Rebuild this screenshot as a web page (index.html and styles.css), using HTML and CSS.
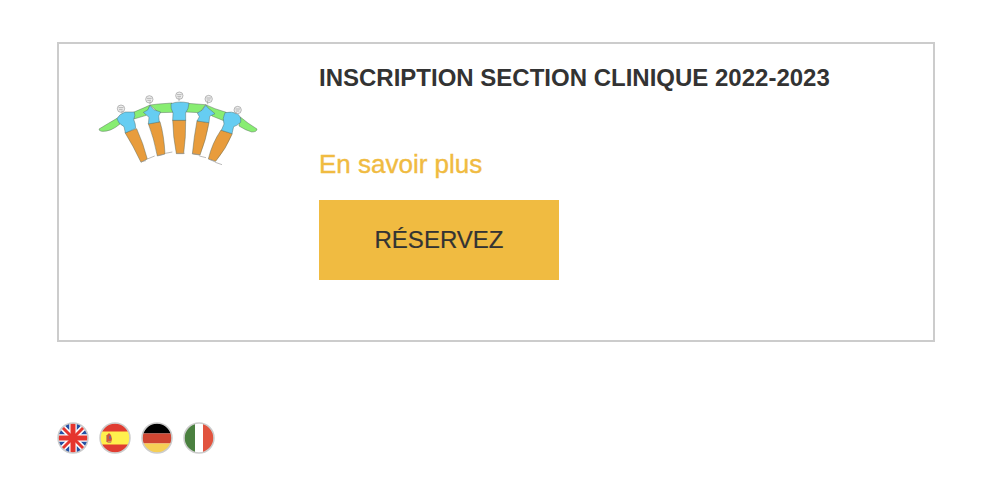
FILE: index.html
```html
<!DOCTYPE html>
<html lang="fr">
<head>
    <meta charset="UTF-8">
    <meta name="viewport" content="width=device-width, initial-scale=1.0">
    <title>Inscription Section Clinique</title>
    <link rel="stylesheet" href="styles.css">
</head>
<body>
    <div class="event-card">
        <svg class="event-logo" viewBox="0 0 540 300" aria-hidden="true">
            <g class="arms">
                <path d="M27 147Q55 130 86 112L90 132Q62 156 35 154Q27 153 27 147Z"/>
                <path d="M130 97L165 82L180 75L169 106L132 117Z"/>
                <path d="M180 75L205 72L246 69L249 97L206 98Z"/>
                <path d="M292 70L347 74L330 98L288 96Z"/>
                <path d="M347 74L375 86L409 97L401 122L366 108Z"/>
                <path d="M451 111Q473 130 501 147Q501 156 485 156Q465 150 447 138Z"/>
            </g>
            <g class="trousers">
                <path d="M105 158L140 146Q160 190 172 237L153 247Q130 198 105 158Z"/>
                <path d="M175 131L210 125Q222 165 225 222L202 228Q192 175 175 131Z"/>
                <path d="M248 120L287 120Q288 170 281 221L259 221Q249 170 248 120Z"/>
                <path d="M321 122L357 128Q348 180 330 225L307 222Q312 170 321 122Z"/>
                <path d="M393 150L427 161Q409 205 377 244L355 237Q366 190 393 150Z"/>
            </g>
            <g class="shirts">
                <path d="M81 116Q88 102 105 96L133 96Q137 107 131 118Q137 131 137 145L106 159L102 140Q83 130 81 116Z"/>
                <path d="M160 97L173 90L180 76L191 89L212 96L206 108L208 126L175 132L177 112Z"/>
                <path d="M243 71Q265 62 297 69Q296 88 287 98L287 121L248 121L249 99Q241 85 243 71Z"/>
                <path d="M322 99L337 90L347 76L357 86L375 101L359 109L357 128L321 123L328 110Z"/>
                <path d="M405 98Q425 93 442 101Q455 111 452 127Q440 138 431 140L426 161L394 151L402 132Q396 115 405 98Z"/>
            </g>
            <g class="heads">
                <circle cx="93" cy="86" r="11"/><path d="M86 83h14M87 89h11M96 92v8"/>
                <circle cx="178" cy="58" r="11"/><path d="M171 55h14M172 61h11M180 64v9"/>
                <circle cx="268" cy="47" r="11"/><path d="M261 44h14M262 50h11M267 53v10"/>
                <circle cx="356" cy="57" r="11"/><path d="M349 54h14M350 60h11M353 63v10"/>
                <circle cx="443" cy="90" r="11"/><path d="M436 87h14M437 93h11M438 96v7"/>
            </g>
            <path class="ground" d="M154 245l14-3M172 237l22-9M203 227l18-4M226 220l21-4M260 220h24M306 220l25 5M328 228l20 5M356 237l20 9M376 247l20 7"/>
        </svg>

        <div class="event-info">
            <h1>INSCRIPTION SECTION CLINIQUE 2022-2023</h1>
            <a href="#" class="more">En savoir plus</a>
            <a href="#" class="btn">RÉSERVEZ</a>
        </div>
    </div>

    <div class="languages">
        <a href="#" class="flag" aria-label="English">
            <svg viewBox="0 0 32 32">
                <defs><clipPath id="disc"><circle cx="16" cy="16" r="14.8"/></clipPath></defs>
                <g clip-path="url(#disc)">
                    <path fill="#2450a4" d="M0 0h32v32H0z"/>
                    <path stroke="#fff" stroke-width="6" d="M3 3l26 26M29 3L3 29"/>
                    <path stroke="#fff" stroke-width="7.500" d="M16 0v32M0 16h32"/>
                    <path stroke="#e5352d" stroke-width="3" d="M3 3l26 26M29 3L3 29"/>
                    <path stroke="#e5352d" stroke-width="5" d="M16 0v32M0 16h32"/>
                </g>
                <circle class="rim" cx="16" cy="16" r="15"/>
            </svg>
        </a>
        <a href="#" class="flag" aria-label="Español">
            <svg viewBox="0 0 32 32">
                <g clip-path="url(#disc)">
                    <path fill="#e03c31" d="M0 0h32v32H0z"/>
                    <path fill="#fff04d" d="M0 9.500h32v13H0z"/>
                    <path fill="#d4553c" d="M8 13l2-2 2 2 1 4-1 4H9l-2-3z"/>
                    <path fill="#7d6a87" d="M10 14h2v3h-2z"/>
                    <path fill="#c79b57" d="M7 13h1v7H7zM9 19h3v2H9z"/>
                </g>
                <circle class="rim" cx="16" cy="16" r="15"/>
            </svg>
        </a>
        <a href="#" class="flag" aria-label="Deutsch">
            <svg viewBox="0 0 32 32">
                <g clip-path="url(#disc)">
                    <path fill="#000" d="M0 0h32v11.500H0z"/>
                    <path fill="#cf4632" d="M0 11.500h32v10H0z"/>
                    <path fill="#f6cf55" d="M0 21.500h32V32H0z"/>
                </g>
                <circle class="rim" cx="16" cy="16" r="15"/>
            </svg>
        </a>
        <a href="#" class="flag" aria-label="Italiano">
            <svg viewBox="0 0 32 32">
                <g clip-path="url(#disc)">
                    <path fill="#fff" d="M0 0h32v32H0z"/>
                    <path fill="#4a803f" d="M0 0h12v32H0z"/>
                    <path fill="#e1533e" d="M20 0h12v32H20z"/>
                </g>
                <circle class="rim" cx="16" cy="16" r="15"/>
            </svg>
        </a>
    </div>
</body>
</html>
```

FILE: styles.css
```css
* {
    margin: 0;
    padding: 0;
    box-sizing: border-box;
}

body {
    font-family: Arial, 'Liberation Sans', sans-serif;
    background: #fff;
    color: #333;
    padding: 42px 58px 0 57px;
}

.event-card {
    display: flex;
    height: 300px;
    border: 2px solid #ccc;
    padding: 18px 31px;
}

.event-logo {
    flex: none;
    width: 180px;
    height: 100px;
    margin: 18px 49px 0 0;
    filter: blur(0.4px);
}

.arms,
.trousers,
.shirts {
    stroke: #526357;
    stroke-width: 2;
    stroke-opacity: 0.65;
    stroke-linejoin: round;
}

.arms {
    fill: #88ed72;
}

.trousers {
    fill: #e89c3c;
}

.shirts {
    fill: #66cdf2;
}

.heads {
    fill: #eee;
    stroke: #999;
    stroke-width: 2;
}

.ground {
    fill: none;
    stroke: #999;
    stroke-width: 2;
}

.event-info {
    display: flex;
    flex-direction: column;
    align-items: flex-start;
}

.event-info h1 {
    font-size: 24px;
    line-height: 32px;
    margin-bottom: 54px;
}

.more {
    color: #f0bb41;
    font-size: 26px;
    line-height: 32px;
    margin-bottom: 20px;
    text-decoration: none;
    -webkit-text-stroke: 0.4px;
}

.btn {
    width: 240px;
    height: 80px;
    background: #f0bb41;
    color: #333;
    font-size: 24px;
    line-height: 80px;
    text-align: center;
    text-decoration: none;
    -webkit-text-stroke: 0.2px;
}

.languages {
    display: flex;
    gap: 10px;
    margin-top: 80px;
}

.flag,
.flag svg {
    display: block;
    width: 32px;
    height: 32px;
}

.flag svg {
    filter: blur(0.3px);
}

.rim {
    fill: none;
    stroke: #ccc;
    stroke-width: 1.5;
}
```
